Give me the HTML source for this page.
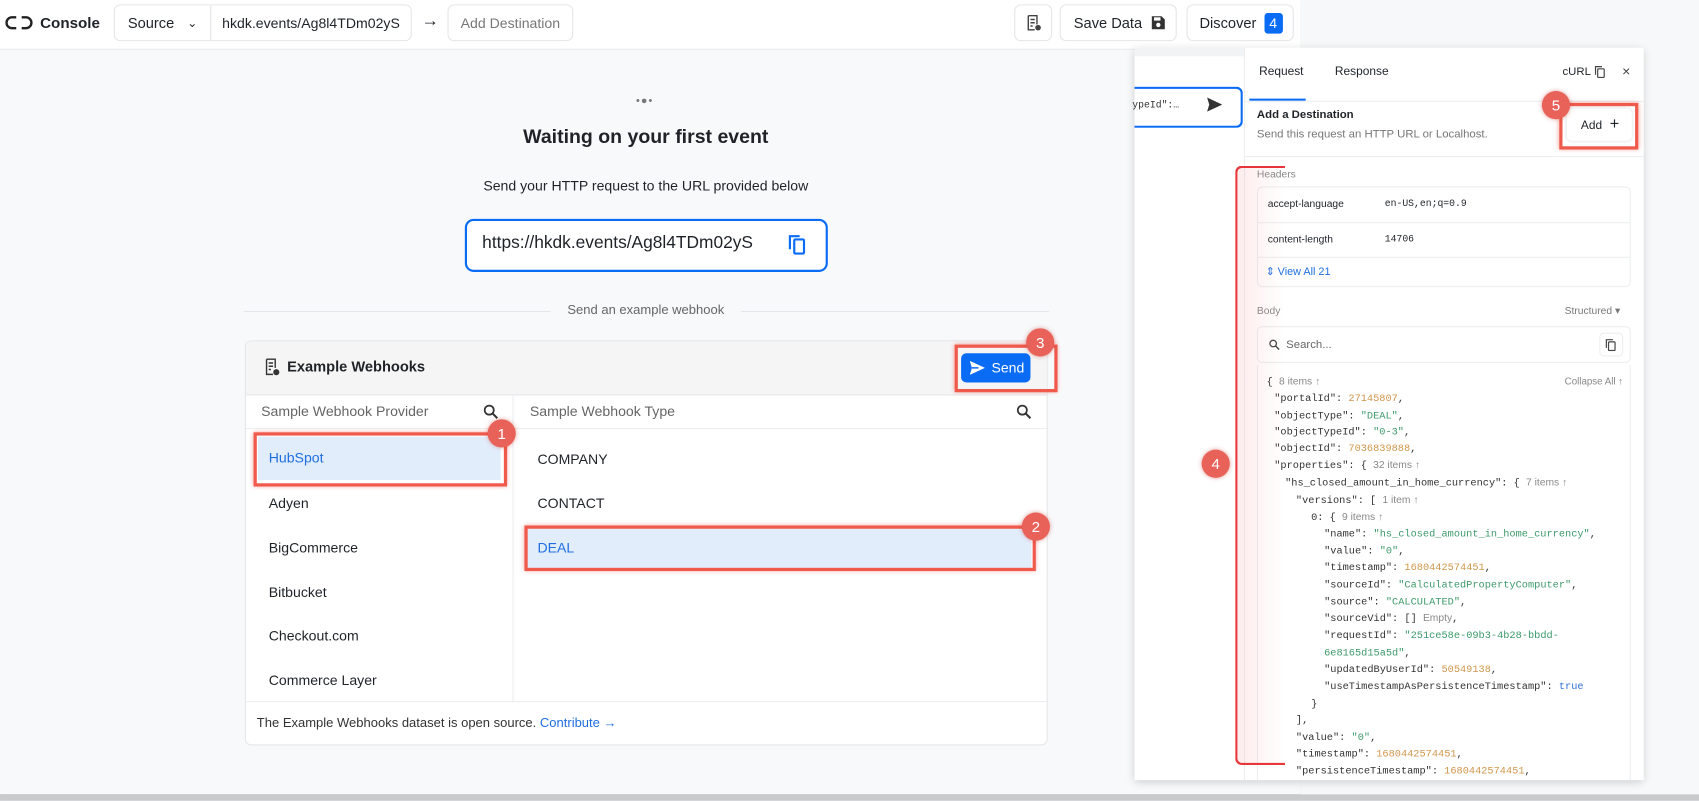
<!DOCTYPE html>
<html><head><meta charset="utf-8"><style>
*{box-sizing:border-box;margin:0;padding:0}
html,body{width:1699px;height:801px;overflow:hidden;background:#f3f4f6;font-family:"Liberation Sans",Arial,sans-serif;color:#1f2328}
#w{position:absolute;left:0;top:0;width:1568px;height:739px;transform:scale(1.08355);transform-origin:0 0;background:#f6f7f8}
.a{position:absolute}
.btn{position:absolute;border:1px solid #e3e5e8;border-radius:6px;background:#fff;font-size:13.5px;display:flex;align-items:center}
.mono{font-family:"Liberation Mono",monospace}
.red{position:absolute;border:3px solid #ef5a4c;box-shadow:0 0 4px rgba(239,90,76,.6)}
.bd{position:absolute;width:26px;height:26px;border-radius:50%;background:#e8625a;color:#fff;font-size:14px;text-align:center;line-height:26px;box-shadow:0 0 4px rgba(200,60,50,.5)}
.li{position:absolute;font-size:13px;color:#1f2328}
.j{position:absolute;font-family:"Liberation Mono",monospace;font-size:9.5px;color:#333;white-space:pre}
.n{color:#d0964c}.s{color:#3d9a6b}.g{color:#888;font-family:"Liberation Sans",sans-serif}.b{color:#2d6fd6}
</style></head><body><div id="w">
<div class="a" style="left:0;top:0;width:1200px;height:733px;background:#f8f9fb;box-shadow:1px 1px 3px rgba(0,0,0,.2)"></div>
<div class="a" style="left:0;top:733px;width:1568px;height:6px;background:#c9cacc"></div>
<div class="a" style="left:1200px;top:0;width:368px;height:733px;background:#f7f8f9"></div>
<div class="a" style="left:0;top:0;width:1200px;height:46px;background:#fff;border-bottom:1px solid #e8e9eb"></div>
<svg class="a" style="left:5px;top:14px" width="26" height="14" viewBox="0 0 26 14"><path d="M10 2H6a5 5 0 0 0 0 10h4" fill="none" stroke="#222" stroke-width="2.2"/><path d="M15 2h4a5 5 0 0 1 0 10h-4" fill="none" stroke="#222" stroke-width="2.2"/></svg>
<div class="a" style="left:37px;top:13px;font-size:14px;font-weight:bold">Console</div>
<div class="btn" style="left:105px;top:4px;width:275px;height:34px"><span style="margin-left:12px">Source</span><span style="margin-left:12px;font-size:11px">&#8964;</span><span style="position:absolute;left:88px;top:0;height:32px;border-left:1px solid #e3e5e8"></span><span style="position:absolute;left:99px;font-size:13px">hkdk.events/Ag8l4TDm02yS</span></div>
<div class="a" style="left:389px;top:11px;font-size:16px">&#8594;</div>
<div class="btn" style="left:413px;top:4px;width:116px;height:34px;color:#777;justify-content:center;font-size:13px">Add Destination</div>
<div class="btn" style="left:936px;top:4px;width:35px;height:34px;justify-content:center"><svg width="16" height="16" viewBox="0 0 16 16"><path d="M3 1.5h8v8M3 1.5v13h6M5 5h4M5 8h4M5 11h2" fill="none" stroke="#444" stroke-width="1.3"/><circle cx="12" cy="12.5" r="2.6" fill="#444"/></svg></div>
<div class="btn" style="left:978px;top:4px;width:108px;height:34px"><span style="margin-left:12px">Save Data</span><svg style="margin-left:8px" width="14" height="14" viewBox="0 0 14 14"><path d="M1 1h9l3 3v9H1z" fill="#333"/><rect x="3" y="2" width="6" height="3" fill="#fff"/><circle cx="7" cy="9" r="2" fill="#fff"/></svg></div>
<div class="btn" style="left:1095px;top:4px;width:99px;height:34px"><span style="margin-left:11px">Discover</span><span style="margin-left:7px;background:#0a6cf5;color:#fff;border-radius:3px;width:17px;height:19px;text-align:center;line-height:19px;font-size:13px">4</span></div>

<div class="a" style="left:587px;top:88px;font-size:10px;color:#777;letter-spacing:1px">•●•</div>
<div class="a" style="left:396px;top:116px;width:400px;text-align:center;font-size:18px;font-weight:bold">Waiting on your first event</div>
<div class="a" style="left:396px;top:164px;width:400px;text-align:center;font-size:13px">Send your HTTP request to the URL provided below</div>
<div class="a" style="left:429px;top:202px;width:335px;height:49px;border:2px solid #0a6cf5;border-radius:8px;background:#fff"></div>
<div class="a" style="left:445px;top:216px;font-size:16px">https://hkdk.events/Ag8l4TDm02yS</div>
<svg class="a" style="left:727px;top:216px" width="18" height="20" viewBox="0 0 18 20"><path d="M2 14V2h9" fill="none" stroke="#0a6cf5" stroke-width="2"/><rect x="6" y="5" width="9" height="13" rx="1" fill="none" stroke="#0a6cf5" stroke-width="2"/></svg>
<div class="a" style="left:225px;top:287px;width:743px;border-top:1px solid #e3e5e8"></div>
<div class="a" style="left:508px;top:279px;width:176px;text-align:center;font-size:12px;color:#666;background:#f8f9fb">Send an example webhook</div>

<div class="a" style="left:226px;top:314px;width:741px;height:374px;border:1px solid #e6e7ea;border-radius:6px;background:#fff;overflow:hidden">
 <div class="a" style="left:0;top:0;width:741px;height:50px;background:#f5f5f6;border-bottom:1px solid #e6e7ea"></div>
 <div class="a" style="left:0;top:80px;width:741px;border-top:1px solid #eceef0"></div>
 <div class="a" style="left:246px;top:50px;height:282px;border-left:1px solid #eceef0"></div>
 <div class="a" style="left:0;top:332px;width:741px;border-top:1px solid #eceef0"></div>
</div>
<svg class="a" style="left:243px;top:330px" width="16" height="18" viewBox="0 0 16 18"><path d="M3 1.5h8v8M3 1.5v14h6M5 5h4M5 8h4M5 11h2" fill="none" stroke="#333" stroke-width="1.3"/><circle cx="12" cy="13.5" r="2.8" fill="#333"/></svg>
<div class="a" style="left:265px;top:331px;font-size:13.5px;font-weight:bold">Example Webhooks</div>
<div class="a" style="left:887px;top:326px;width:64px;height:27px;background:#0a6cf5;border-radius:5px;color:#fff;font-size:13px;line-height:27px"><svg style="position:absolute;left:8px;top:7px" width="14" height="13" viewBox="0 0 14 13"><path d="M0 0l14 6.5L0 13l2-6.5z" fill="#fff"/><path d="M2 6.5h6" stroke="#0a6cf5" stroke-width="1.3"/></svg><span style="position:absolute;left:28px">Send</span></div>
<div class="a" style="left:241px;top:372px;font-size:13px;color:#666">Sample Webhook Provider</div>
<div class="a" style="left:489px;top:372px;font-size:13px;color:#666">Sample Webhook Type</div>
<svg class="a" style="left:446px;top:373px" width="14" height="14" viewBox="0 0 14 14"><circle cx="5.5" cy="5.5" r="4.2" fill="none" stroke="#333" stroke-width="1.6"/><path d="M8.5 8.5l4.5 4.5" stroke="#333" stroke-width="1.8"/></svg>
<svg class="a" style="left:938px;top:373px" width="14" height="14" viewBox="0 0 14 14"><circle cx="5.5" cy="5.5" r="4.2" fill="none" stroke="#333" stroke-width="1.6"/><path d="M8.5 8.5l4.5 4.5" stroke="#333" stroke-width="1.8"/></svg>
<div class="a" style="left:238px;top:403px;width:224px;height:40px;background:#e2edfc"></div>
<div class="li" style="left:248px;top:415px;color:#1f6fe0">HubSpot</div>
<div class="li" style="left:248px;top:457px">Adyen</div>
<div class="li" style="left:248px;top:498px">BigCommerce</div>
<div class="li" style="left:248px;top:539px">Bitbucket</div>
<div class="li" style="left:248px;top:579px">Checkout.com</div>
<div class="li" style="left:248px;top:620px">Commerce Layer</div>
<div class="li" style="left:496px;top:416px">COMPANY</div>
<div class="li" style="left:496px;top:457px">CONTACT</div>
<div class="a" style="left:487px;top:488px;width:465px;height:36px;background:#e2edfc"></div>
<div class="li" style="left:496px;top:498px;color:#1f6fe0">DEAL</div>
<div class="a" style="left:237px;top:660px;font-size:12px;color:#333">The Example Webhooks dataset is open source. <span style="color:#1f6fe0">Contribute &#8594;</span></div>

<div class="a" style="left:1047px;top:44px;width:470px;height:676px;background:#fff;box-shadow:0 2px 8px rgba(0,0,0,.18)"></div>
<div class="a" style="left:1047px;top:44px;width:101px;height:8px;background:#f2f3f4"></div>
<div class="a" style="left:1047px;top:80px;width:100px;height:38px;border:2px solid #0a6cf5;border-left:none;border-radius:0 6px 6px 0;background:#fff"></div>
<div class="a mono" style="left:1045px;top:92px;font-size:9px;color:#333">ypeId":…</div>
<svg class="a" style="left:1114px;top:90px" width="14" height="13" viewBox="0 0 14 13"><path d="M0 0l14 6.5L0 13l2-6.5z" fill="#333"/></svg>
<div class="a" style="left:1148px;top:44px;height:676px;border-left:1px solid #eceef0"></div>
<div class="a" style="left:1162px;top:60px;font-size:11px">Request</div>
<div class="a" style="left:1232px;top:60px;font-size:11px">Response</div>
<div class="a" style="left:1153px;top:91px;width:52px;height:2px;background:#0a6cf5"></div>
<div class="a" style="left:1149px;top:93px;width:368px;border-top:1px solid #eceef0"></div>
<div class="a" style="left:1442px;top:60px;font-size:10.5px">cURL</div>
<svg class="a" style="left:1471px;top:60px" width="11" height="12" viewBox="0 0 11 12"><path d="M1.5 9V1.5h6" fill="none" stroke="#444" stroke-width="1.1"/><rect x="3.5" y="3.5" width="6" height="8" rx=".8" fill="none" stroke="#444" stroke-width="1.1"/></svg>
<div class="a" style="left:1497px;top:58px;font-size:13px;color:#444">×</div>
<div class="a" style="left:1160px;top:100px;font-size:10.5px;font-weight:bold">Add a Destination</div>
<div class="a" style="left:1160px;top:118px;font-size:10.5px;color:#777">Send this request an HTTP URL or Localhost.</div>
<div class="a" style="left:1446px;top:100px;width:60px;height:30px;border-radius:5px;background:#fff;box-shadow:0 0 3px rgba(0,0,0,.15);font-size:11px;line-height:30px;padding-left:13px">Add <span style="font-size:15px;margin-left:4px">+</span></div>
<div class="a" style="left:1149px;top:144px;width:368px;border-top:1px solid #eceef0"></div>
<div class="a" style="left:1160px;top:156px;font-size:9.5px;color:#888">Headers</div>
<div class="a" style="left:1160px;top:172px;width:345px;height:93px;border:1px solid #eceef0;border-radius:5px"></div>
<div class="a" style="left:1160px;top:205px;width:345px;border-top:1px solid #eceef0"></div>
<div class="a" style="left:1160px;top:237px;width:345px;border-top:1px solid #eceef0"></div>
<div class="a" style="left:1170px;top:183px;font-size:9.5px">accept-language</div>
<div class="a mono" style="left:1278px;top:183px;font-size:9px">en-US,en;q=0.9</div>
<div class="a" style="left:1170px;top:216px;font-size:9.5px">content-length</div>
<div class="a mono" style="left:1278px;top:216px;font-size:9px">14706</div>
<div class="a" style="left:1168px;top:246px;font-size:10px;color:#1f6fe0">⇕ View All 21</div>
<div class="a" style="left:1160px;top:282px;font-size:9.5px;color:#888">Body</div>
<div class="a" style="left:1444px;top:282px;font-size:9.5px;color:#777">Structured ▾</div>
<div class="a" style="left:1160px;top:301px;width:345px;height:34px;border:1px solid #eceef0;border-radius:5px"></div>
<svg class="a" style="left:1171px;top:313px" width="10" height="10" viewBox="0 0 10 10"><circle cx="4" cy="4" r="3" fill="none" stroke="#444" stroke-width="1.2"/><path d="M6.3 6.3L9.5 9.5" stroke="#444" stroke-width="1.3"/></svg>
<div class="a" style="left:1187px;top:312px;font-size:10.5px;color:#666">Search...</div>
<div class="a" style="left:1476px;top:307px;width:22px;height:22px;border:1px solid #eceef0;border-radius:4px"></div>
<svg class="a" style="left:1481px;top:312px" width="11" height="12" viewBox="0 0 11 12"><path d="M1.5 9V1.5h6" fill="none" stroke="#444" stroke-width="1.1"/><rect x="3.5" y="3.5" width="6" height="8" rx=".8" fill="none" stroke="#444" stroke-width="1.1"/></svg>
<div class="a" style="left:1160px;top:337px;width:345px;height:383px;border-left:1px solid #eceef0;border-right:1px solid #eceef0"></div>
<div class="j" style="left:1169px;top:347px">{ <span class="g">8 items ↑</span></div>
<div class="j g" style="left:1444px;top:347px;font-size:9px">Collapse All ↑</div>
<div class="j" style="left:1176px;top:362px">"portalId": <span class="n">27145807</span>,</div>
<div class="j" style="left:1176px;top:378px">"objectType": <span class="s">"DEAL"</span>,</div>
<div class="j" style="left:1176px;top:393px">"objectTypeId": <span class="s">"0-3"</span>,</div>
<div class="j" style="left:1176px;top:408px">"objectId": <span class="n">7036839888</span>,</div>
<div class="j" style="left:1176px;top:424px">"properties": { <span class="g">32 items ↑</span></div>
<div class="j" style="left:1186px;top:440px">"hs_closed_amount_in_home_currency": { <span class="g">7 items ↑</span></div>
<div class="j" style="left:1196px;top:456px">"versions": [ <span class="g">1 item ↑</span></div>
<div class="j" style="left:1210px;top:472px">0: { <span class="g">9 items ↑</span></div>
<div class="j" style="left:1222px;top:487px">"name": <span class="s">"hs_closed_amount_in_home_currency"</span>,</div>
<div class="j" style="left:1222px;top:503px">"value": <span class="s">"0"</span>,</div>
<div class="j" style="left:1222px;top:518px">"timestamp": <span class="n">1680442574451</span>,</div>
<div class="j" style="left:1222px;top:534px">"sourceId": <span class="s">"CalculatedPropertyComputer"</span>,</div>
<div class="j" style="left:1222px;top:550px">"source": <span class="s">"CALCULATED"</span>,</div>
<div class="j" style="left:1222px;top:565px">"sourceVid": [] <span class="g">Empty</span>,</div>
<div class="j" style="left:1222px;top:581px">"requestId": <span class="s">"251ce58e-09b3-4b28-bbdd-</span></div>
<div class="j s" style="left:1222px;top:597px">6e8165d15a5d"<span style="color:#333">,</span></div>
<div class="j" style="left:1222px;top:612px">"updatedByUserId": <span class="n">50549138</span>,</div>
<div class="j" style="left:1222px;top:628px">"useTimestampAsPersistenceTimestamp": <span class="b">true</span></div>
<div class="j" style="left:1210px;top:644px">}</div>
<div class="j" style="left:1196px;top:659px">],</div>
<div class="j" style="left:1196px;top:675px">"value": <span class="s">"0"</span>,</div>
<div class="j" style="left:1196px;top:690px">"timestamp": <span class="n">1680442574451</span>,</div>
<div class="j" style="left:1196px;top:706px">"persistenceTimestamp": <span class="n">1680442574451</span>,</div>

<div class="red" style="left:234px;top:399px;width:234px;height:50px"></div>
<div class="bd" style="left:450px;top:387px">1</div>
<div class="red" style="left:484px;top:485px;width:472px;height:42px"></div>
<div class="bd" style="left:943px;top:473px">2</div>
<div class="red" style="left:881px;top:318px;width:95px;height:44px"></div>
<div class="bd" style="left:947px;top:303px">3</div>
<div class="red" style="left:1439px;top:95px;width:73px;height:43px"></div>
<div class="bd" style="left:1423px;top:84px">5</div>
<div class="a" style="left:1140px;top:153px;width:46px;height:553px;border:2px solid #e8353a;border-right:none;border-radius:6px 0 0 6px;background:linear-gradient(90deg,rgba(240,100,100,.12),rgba(255,255,255,0))"></div>
<div class="bd" style="left:1109px;top:415px">4</div>
</div></body></html>
